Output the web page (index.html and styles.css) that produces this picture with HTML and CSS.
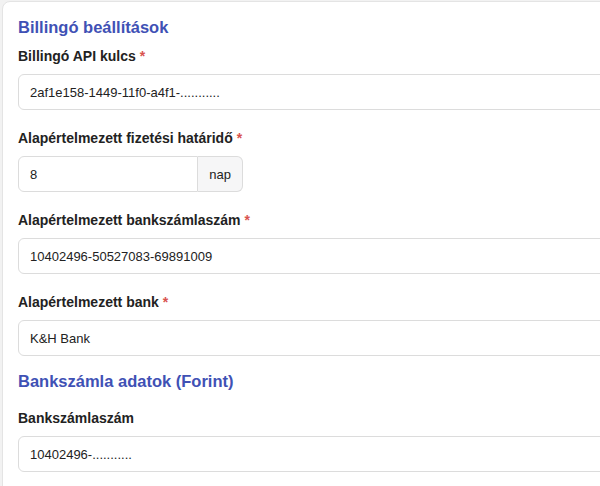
FILE: index.html
```html
<!DOCTYPE html>
<html lang="hu">
<head>
<meta charset="utf-8">
<link rel="stylesheet" href="styles.css">
</head>
<body>
<div class="card">
  <h2 class="section-title">Billingó beállítások</h2>
  <div class="field">
    <label class="label">Billingó API kulcs <span class="req">*</span></label>
    <div class="input">2af1e158-1449-11f0-a4f1-...........</div>
  </div>
  <div class="field">
    <label class="label">Alapértelmezett fizetési határidő <span class="req">*</span></label>
    <div class="input-group">
      <div class="input grouped">8</div>
      <div class="addon">nap</div>
    </div>
  </div>
  <div class="field">
    <label class="label">Alapértelmezett bankszámlaszám <span class="req">*</span></label>
    <div class="input">10402496-50527083-69891009</div>
  </div>
  <div class="field">
    <label class="label">Alapértelmezett bank <span class="req">*</span></label>
    <div class="input">K&amp;H Bank</div>
  </div>
  <h2 class="section-title second">Bankszámla adatok (Forint)</h2>
  <div class="field">
    <label class="label">Bankszámlaszám</label>
    <div class="input">10402496-...........</div>
  </div>
</div>
</body>
</html>
```
FILE: styles.css
```css
html, body {
  margin: 0;
  padding: 0;
  background: #f2f2f2;
  overflow: hidden;
  font-family: "Liberation Sans", Arial, sans-serif;
}
.card {
  margin: 1px 0 0 2px;
  width: 720px;
  background: #fff;
  border: 1px solid #e4e4e4;
  border-radius: 8px;
  padding: 14px 15px 20px 15px;
  box-sizing: border-box;
}
.section-title {
  margin: 0 0 8px 0;
  font-size: 16.5px;
  line-height: 22px;
  font-weight: bold;
  color: #3f51b5;
}
.section-title.second {
  margin-top: -4px;
  margin-bottom: 16px;
}
.field {
  display: flex;
  flex-direction: column;
  margin-bottom: 18px;
}
.label {
  display: block;
  font-size: 14px;
  line-height: 20px;
  font-weight: bold;
  color: #222;
  margin-bottom: 8px;
}
.req {
  color: #d9534f;
}
.input {
  height: 36px;
  box-sizing: border-box;
  border: 1px solid #dcdcdc;
  border-radius: 6px;
  padding: 0 11px;
  display: flex;
  align-items: center;
  font-size: 13px;
  color: #222;
  background: #fff;
}
.input-group {
  display: flex;
  width: 225px;
}
.input.grouped {
  flex: 1;
  border-radius: 6px 0 0 6px;
}
.addon {
  height: 36px;
  box-sizing: border-box;
  border: 1px solid #dcdcdc;
  border-left: 0;
  border-radius: 0 6px 6px 0;
  background: #f6f6f7;
  padding: 0 11px;
  display: flex;
  align-items: center;
  font-size: 13px;
  color: #222;
}
```
